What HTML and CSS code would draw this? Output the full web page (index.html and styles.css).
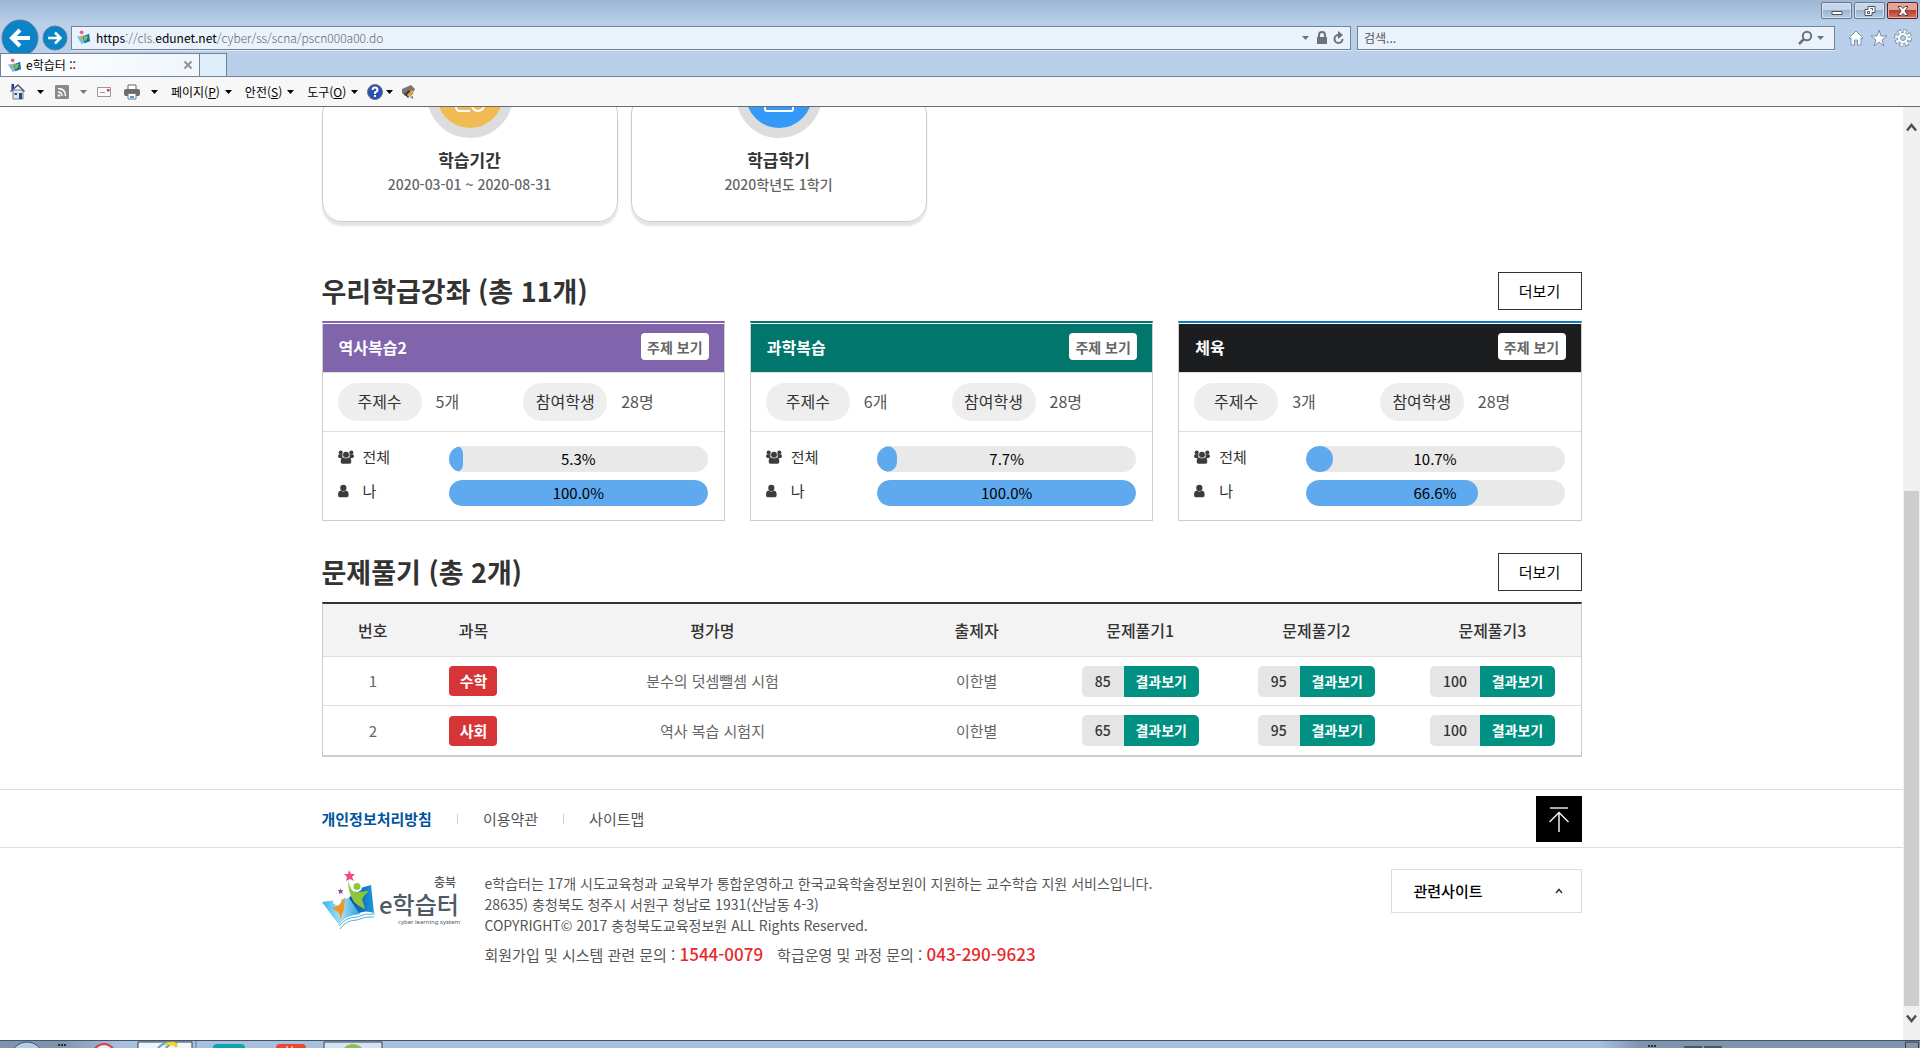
FILE: index.html
```html
<!DOCTYPE html>
<html lang="ko">
<head>
<meta charset="utf-8">
<meta name="viewport" content="width=device-width, initial-scale=1">
<title>e학습터 ::</title>
<link rel="stylesheet" href="styles.css">
</head>
<body>
<svg class="defs" width="0" height="0" aria-hidden="true">
  <symbol id="site-icon" viewBox="0 0 16 16">
    <path d="M1 7l6-1 4 7-5 2z" fill="#6cc4ec"/><path d="M7 7l7-3 1 8-6 2z" fill="#1470b8"/>
    <path d="M7 4l2 3 4-1-2 5-2 1z" fill="#86c440"/><path d="M4 8l3-1-1 5z" fill="#f39a2c"/><circle cx="6" cy="2.500" r="2" fill="#ef5a9a"/>
  </symbol>
  <symbol id="users" viewBox="0 0 18 16">
    <circle cx="3" cy="3" r="2.300"/><circle cx="15" cy="3" r="2.300"/><path d="M0 7q0-2 2-2h3.500q-1.500 2 0 4.500H3.500Q0 9.500 0 7zM18 7q0-2-2-2h-3.500q1.500 2 0 4.500h2Q18 9.500 18 7z"/>
    <circle cx="9" cy="5.500" r="3.300"/><path d="M3 13q0-4.500 3-4.500 3 2 6 0 3 0 3 4.500 0 2.500-2 2.500H5q-2 0-2-2.500z"/>
  </symbol>
  <symbol id="user" viewBox="0 0 18 16">
    <circle cx="6" cy="4.500" r="3.500"/><path d="M0 12.500Q0 8 3 7.500q3 2 6 0 3 .5 3 5 0 2.500-2 2.500H2q-2 0-2-2.500z"/>
  </symbol>
</svg>

<header class="browser">
  <div class="titlebar">
    <button class="win" aria-label="최소화"><svg width="14" height="12" viewBox="0 0 14 12"><path d="M2 6.500h10v3H2z" fill="#fff" stroke="#4b5568"/></svg></button>
    <button class="win" aria-label="이전 크기로"><svg width="14" height="12" viewBox="0 0 14 12"><path d="M5 1.500h7v6H9v3H2v-6h3z" fill="#fff" stroke="#4b5568"/><path d="M4.500 6.500h2v2h-2zM7.500 3.500h2v2" fill="none" stroke="#4b5568"/></svg></button>
    <button class="win win-close" aria-label="닫기"><svg width="14" height="12" viewBox="0 0 14 12"><path d="M2 1.500h3l2 2 2-2h3L9 6l3 4.500H9l-2-2-2 2H2L5 6z" fill="#fff" stroke="#5d3a4a"/></svg></button>
  </div>
  <div class="navbar">
    <button class="nav-back" aria-label="뒤로"><svg width="38" height="38" viewBox="0 0 38 38"><circle cx="19" cy="19" r="18" fill="#0a84c6" stroke="#5f7f9b"/><path d="M29 19H12M19 11l-8 8 8 8" fill="none" stroke="#fff" stroke-width="4"/></svg></button>
    <button class="nav-forward" aria-label="앞으로"><svg width="26" height="26" viewBox="0 0 26 26"><circle cx="13" cy="13" r="12" fill="#0a84c6" stroke="#5f7f9b"/><path d="M6 13h12M13 7.500l5.500 5.500-5.500 5.500" fill="none" stroke="#fff" stroke-width="2.500"/></svg></button>
    <div class="address">
      <svg width="15" height="15"><use href="#site-icon"/></svg>
      <span class="url"><b>https</b>://cls.<b>edunet.net</b>/cyber/ss/scna/pscn000a00.do</span>
      <svg width="26" height="14" viewBox="0 0 26 14"><path d="M0 5h7l-3.500 4z" fill="#6d7276"/><path d="M15 6h10v7H15z" fill="#6d7276"/><path d="M17 6V4a3 3 0 0 1 6 0v2" fill="none" stroke="#6d7276" stroke-width="2"/></svg>
      <svg width="11" height="14" viewBox="0 0 11 14"><path d="M5.500 4A4 4 0 1 0 9.500 8" fill="none" stroke="#6d7276" stroke-width="2"/><path d="M5 0l5 4-5 4z" fill="#6d7276"/></svg>
    </div>
    <div class="search">
      <input type="text" placeholder="검색..." aria-label="검색">
      <svg width="28" height="16" viewBox="0 0 28 16"><circle cx="9" cy="6" r="4.200" fill="none" stroke="#6d7276" stroke-width="2"/><path d="M6 9l-5 5" stroke="#6d7276" stroke-width="2.500"/><path d="M19 6h7l-3.500 4z" fill="#6d7276"/></svg>
    </div>
    <div class="tools">
      <svg width="16" height="18" viewBox="0 0 16 18"><path d="M1 9l7-7 7 7-1 1-1-1v7H9.500v-5h-3v5H3V9l-1 1z" fill="#fff" stroke="#7d90a8"/></svg>
      <svg width="18" height="18" viewBox="0 0 18 18"><path d="M9 1l2 6h6l-5 4 2 6-5-4-5 4 2-6-5-4h6z" fill="#fff" stroke="#7d90a8"/></svg>
      <svg width="18" height="18" viewBox="0 0 18 18"><circle cx="9" cy="9" r="7" fill="none" stroke="#7d90a8" stroke-width="4" stroke-dasharray="3.500 2"/><circle cx="9" cy="9" r="5.500" fill="#fff" stroke="#7d90a8"/><circle cx="9" cy="9" r="6.500" fill="none" stroke="#fff" stroke-width="3" stroke-dasharray="2.300 2.800"/><circle cx="9" cy="9" r="2.500" fill="#bad0ea" stroke="#7d90a8"/></svg>
    </div>
  </div>
  <div class="tabs">
    <div class="tab"><svg width="15" height="15"><use href="#site-icon"/></svg><span>e학습터 ::</span><svg width="10" height="10" viewBox="0 0 10 10"><path d="M1.500 1.500l7 7M8.500 1.500l-7 7" stroke="#8f9296" stroke-width="2"/></svg></div>
    <div class="tab-new"></div>
  </div>
  <div class="commands">
    <svg width="16" height="17" viewBox="0 0 16 17"><path d="M3 7h10v9H3z" fill="#dfe7f0" stroke="#6c7f98"/><path d="M0 8l8-7 7 7-1 1-6-6-7 6z" fill="#46566f"/><path d="M1.500 1h2.500v4l-2.500 2z" fill="#2334b5"/><path d="M9 10h3v6H9z" fill="#274a80"/><path d="M4.500 10h2.500v2H4.500z" fill="#444"/></svg>
    <svg class="arrow" width="7" height="4"><path d="M0 0h7L3.500 4z"/></svg>
    <svg class="after-gap" width="14" height="14" viewBox="0 0 14 14"><rect width="14" height="14" rx="1" fill="#8a8a8a"/><path d="M3 3.500q7.500 0 7.500 7.500M3 7q4 0 4 4" fill="none" stroke="#fff" stroke-width="1.500"/><circle cx="4" cy="10.500" r="1.200" fill="#fff"/></svg>
    <svg class="arrow dim" width="7" height="4"><path d="M0 0h7L3.500 4z"/></svg>
    <svg class="mail" width="14" height="10" viewBox="0 0 14 10"><path d="M.5.5h13v9H.5z" fill="#fafafa" stroke="#9a9a9a"/><path d="M3 5.500h5" stroke="#9a9a9a"/><path d="M10 2h2.500v2.500H10z" fill="#d43b3b"/></svg>
    <svg class="printer" width="16" height="16" viewBox="0 0 16 16"><path d="M4 1h8v5H4z" fill="#fff" stroke="#666"/><rect y="5" width="16" height="7" rx="2" fill="#6a6d70"/><path d="M4 9.500h8V15H4z" fill="#fff" stroke="#777"/><path d="M6 12h4v2H6z" fill="#3aa4d0"/></svg>
    <svg class="arrow" width="7" height="4"><path d="M0 0h7L3.500 4z"/></svg>
    <button class="menu"><span>페이지(<u>P</u>)</span><svg width="7" height="4"><path d="M0 0h7L3.500 4z"/></svg></button>
    <button class="menu"><span>안전(<u>S</u>)</span><svg width="7" height="4"><path d="M0 0h7L3.500 4z"/></svg></button>
    <button class="menu"><span>도구(<u>O</u>)</span><svg width="7" height="4"><path d="M0 0h7L3.500 4z"/></svg></button>
    <button class="menu help" aria-label="도움말"><svg width="16" height="16" viewBox="0 0 16 16"><circle cx="8" cy="8" r="7.500" fill="#2b4fb4" stroke="#6b7383"/><path d="M5.500 6q0-2.500 2.500-2.500T10.500 6Q10.500 7.500 8 8.500V10M8 11v2" fill="none" stroke="#fff" stroke-width="2"/></svg><svg width="7" height="4"><path d="M0 0h7L3.500 4z"/></svg></button>
    <svg class="pen" width="15" height="15" viewBox="0 0 15 15"><path d="M1 5l9-4 4 4-3 6-7 1-3-3z" fill="#7c7772"/><path d="M3 10l5-4 3 4-4 4z" fill="#3c4048"/><path d="M6 11l5-5 2 1-5 6z" fill="#f0a836"/><path d="M9 13l3-1v3z" fill="#5c7fc0"/></svg>
  </div>
</header>

<div class="viewport">
  <div class="page">
    <main class="wrap">
      <section class="summary">
        <article class="info">
          <div class="disc disc-yellow"><svg width="34" height="34" viewBox="0 0 34 34"><path d="M17 33H7q-4 0-4-4V5q0-3 4-3h20q4 0 4 3v9" fill="none" stroke="#fff" stroke-width="2"/><circle cx="25" cy="27" r="6" fill="none" stroke="#fff" stroke-width="2"/></svg></div>
          <h3>학습기간</h3><p>2020-03-01 ~ 2020-08-31</p>
        </article>
        <article class="info">
          <div class="disc disc-blue"><svg width="34" height="34" viewBox="0 0 34 34"><rect x="3" y="4" width="28" height="29" rx="2" fill="none" stroke="#fff" stroke-width="2"/></svg></div>
          <h3>학급학기</h3><p>2020학년도 1학기</p>
        </article>
      </section>

      <section class="block">
        <div class="block-head"><h2>우리학급강좌 (총 11개)</h2><button class="more">더보기</button></div>
        <div class="courses">
          <article class="course purple">
            <div class="course-head"><h3>역사복습2</h3><button class="topics">주제 보기</button></div>
            <dl class="stats"><div><dt>주제수</dt><dd>5개</dd></div><div><dt>참여학생</dt><dd>28명</dd></div></dl>
            <div class="rates">
              <div class="rate"><svg width="16" height="16"><use href="#users"/></svg><span class="who">전체</span><div class="bar"><div class="fill" style="width:5.3%"></div><span class="pct">5.3%</span></div></div>
              <div class="rate"><svg width="16" height="16"><use href="#user"/></svg><span class="who">나</span><div class="bar"><div class="fill" style="width:100%"></div><span class="pct">100.0%</span></div></div>
            </div>
          </article>
          <article class="course green">
            <div class="course-head"><h3>과학복습</h3><button class="topics">주제 보기</button></div>
            <dl class="stats"><div><dt>주제수</dt><dd>6개</dd></div><div><dt>참여학생</dt><dd>28명</dd></div></dl>
            <div class="rates">
              <div class="rate"><svg width="16" height="16"><use href="#users"/></svg><span class="who">전체</span><div class="bar"><div class="fill" style="width:7.7%"></div><span class="pct">7.7%</span></div></div>
              <div class="rate"><svg width="16" height="16"><use href="#user"/></svg><span class="who">나</span><div class="bar"><div class="fill" style="width:100%"></div><span class="pct">100.0%</span></div></div>
            </div>
          </article>
          <article class="course black">
            <div class="course-head"><h3>체육</h3><button class="topics">주제 보기</button></div>
            <dl class="stats"><div><dt>주제수</dt><dd>3개</dd></div><div><dt>참여학생</dt><dd>28명</dd></div></dl>
            <div class="rates">
              <div class="rate"><svg width="16" height="16"><use href="#users"/></svg><span class="who">전체</span><div class="bar"><div class="fill" style="width:10.7%"></div><span class="pct">10.7%</span></div></div>
              <div class="rate"><svg width="16" height="16"><use href="#user"/></svg><span class="who">나</span><div class="bar"><div class="fill" style="width:66.6%"></div><span class="pct">66.6%</span></div></div>
            </div>
          </article>
        </div>
      </section>

      <section class="block">
        <div class="block-head"><h2>문제풀기 (총 2개)</h2><button class="more">더보기</button></div>
        <table class="quizzes">
          <colgroup><col class="c-no"><col class="c-no"><col class="c-name"><col class="c-by"><col class="c-quiz"><col class="c-quiz"><col class="c-quiz"></colgroup>
          <thead><tr><th>번호</th><th>과목</th><th>평가명</th><th>출제자</th><th>문제풀기1</th><th>문제풀기2</th><th>문제풀기3</th></tr></thead>
          <tbody>
            <tr><td>1</td><td><span class="subject">수학</span></td><td>분수의 덧셈뺄셈 시험</td><td>이한별</td>
              <td><span class="result"><span class="score">85</span><button>결과보기</button></span></td>
              <td><span class="result"><span class="score">95</span><button>결과보기</button></span></td>
              <td><span class="result"><span class="score">100</span><button>결과보기</button></span></td></tr>
            <tr><td>2</td><td><span class="subject">사회</span></td><td>역사 복습 시험지</td><td>이한별</td>
              <td><span class="result"><span class="score">65</span><button>결과보기</button></span></td>
              <td><span class="result"><span class="score">95</span><button>결과보기</button></span></td>
              <td><span class="result"><span class="score">100</span><button>결과보기</button></span></td></tr>
          </tbody>
        </table>
      </section>
    </main>

    <footer>
      <div class="foot-nav">
        <div class="wrap foot-row">
          <nav><a class="privacy" href="#">개인정보처리방침</a><a href="#">이용약관</a><a href="#">사이트맵</a></nav>
          <button class="to-top" aria-label="맨 위로"><svg width="24" height="28" viewBox="0 0 24 28"><path d="M3 3h18" stroke="#aaa" stroke-width="2"/><path d="M12 27V7M2.500 17L12 7.500l9.500 9.500" fill="none" stroke="#eee" stroke-width="1.500"/></svg></button>
        </div>
      </div>
      <div class="wrap foot-info">
        <svg class="logo" width="138" height="62" viewBox="0 0 138 62" role="img" aria-label="충북 e학습터">
          <defs>
            <linearGradient id="left-page" x1="0" x2="1"><stop offset="0" stop-color="#35b4e8"/><stop offset=".5" stop-color="#a8e0f6"/><stop offset="1" stop-color="#2a9edc"/></linearGradient>
            <linearGradient id="right-page" x1="0" x2="1"><stop offset="0" stop-color="#0a4a98"/><stop offset="1" stop-color="#1b9ada"/></linearGradient>
          </defs>
          <path d="M0 33l14-2 13-2 11 16-6 1q-10 2-15 10z" fill="url(#left-page)"/>
          <path d="M27 29l8-9 14-4 3 28q-8-3-15 0z" fill="url(#right-page)"/>
          <path d="M17 57q7-9 18-9 8-4 18-3M18 60q6-9 17-9 8-4 17-3" fill="none" stroke="#4bb4e2"/>
          <circle cx="15" cy="32" r="4" fill="#fff"/><circle cx="35" cy="18" r="5" fill="#fff"/>
          <path d="M9 38q6 1 9-3l5-7q-1 8-1 12l-4 12q1-6-2-9z" fill="#f7941d"/>
          <path d="M26 11q2 9 6 12h6q5-1 9-1-5 4-7 8l3 10q-6-2-11-7-6-9-6-22z" fill="#8cc63f"/>
          <circle cx="35" cy="17.500" r="3.500" fill="#8cc63f"/>
          <path d="M27 1l2 4 4 0-3 3 2 4-4-2-4 2 1-4-3-3 4 0z" fill="#ee4a8c"/>
          <path d="M19 19l0 2 2 0-1 2 1 2-2-1-2 1 0-2-1-2 2 0z" fill="#9a4aa5"/>
          <text class="logo-city" x="112" y="18">충북</text>
          <text class="logo-name" x="57" y="45">e학습터</text>
          <text class="logo-sub" x="76" y="55">cyber learning system</text>
        </svg>
        <address>
          <p>e학습터는 17개 시도교육청과 교육부가 통합운영하고 한국교육학술정보원이 지원하는 교수학습 지원 서비스입니다.</p>
          <p>28635) 충청북도 청주시 서원구 청남로 1931(산남동 4-3)</p>
          <p>COPYRIGHT© 2017 충청북도교육정보원 ALL Rights Reserved.</p>
          <p class="contact"><span>회원가입 및 시스템 관련 문의 : <b>1544-0079</b></span><span>학급운영 및 과정 문의 : <b>043-290-9623</b></span></p>
        </address>
        <button class="related">관련사이트<svg width="8" height="6" viewBox="0 0 8 6"><path d="M1 5l3-3.500L7 5" fill="none" stroke="#333" stroke-width="1.500"/></svg></button>
      </div>
    </footer>
  </div>
  <div class="scrollbar">
    <svg width="11" height="9" viewBox="0 0 11 9"><path d="M1 7.500L5.500 2 10 7.500" fill="none" stroke="#505050" stroke-width="2.500"/></svg>
    <div class="track"><div class="thumb"></div></div>
    <svg width="11" height="9" viewBox="0 0 11 9"><path d="M1 1.500L5.500 7 10 1.500" fill="none" stroke="#505050" stroke-width="2.500"/></svg>
  </div>
</div>

<div class="taskbar">
  <svg width="400" height="7" viewBox="0 0 400 7">
    <ellipse cx="27" cy="14" rx="15" ry="13" fill="#b8cde0" stroke="#2c5a85"/>
    <path d="M58 4h8" stroke="#222f40" stroke-width="2" stroke-dasharray="2 1"/>
    <circle cx="104" cy="14" r="11" fill="#f4e8ec" stroke="#d34052" stroke-width="2"/>
    <path d="M138 8V1h54v6" fill="#eef4fb" stroke="#33404f"/><path d="M196 0v7" stroke="#66778c"/>
    <path d="M158 7q6-6 9-4M166 7q5-6 11-4" fill="none" stroke="#5aa0d0" stroke-width="2"/><path d="M165 4q9-4 12 2" fill="none" stroke="#f7d51f" stroke-width="3"/>
    <rect x="213" y="3" width="32" height="12" rx="4" fill="#0ca5ab"/><rect x="276" y="3" width="30" height="12" rx="4" fill="#ee4430"/><path d="M287 5v2M292 5v2" stroke="#fff"/>
    <path d="M324 8V1h58v6" fill="#d6e2f1" stroke="#33404f"/><circle cx="353" cy="15" r="12" fill="#8cbf5c"/>
  </svg>
  <svg width="280" height="7" viewBox="0 0 280 7">
    <path d="M8 5h8" stroke="#222f40" stroke-width="2" stroke-dasharray="2 1"/><path d="M44 6h18M64 6h18" stroke="#4a5668" stroke-width="2"/><path d="M265.500 8V1h13v7" fill="#8593a8" stroke="#343e4d"/>
  </svg>
</div>
</body>
</html>
```
FILE: styles.css
```css
* { box-sizing: border-box; }
body {
  margin: 0;
  height: 100vh;
  display: flex;
  flex-direction: column;
  overflow: hidden;
  background: #fff;
  color: #333;
  font: 15px/24px "Noto Sans CJK KR", "Noto Sans", sans-serif;
}
h2, h3, p, dl, dd { margin: 0; }
button { font: inherit; color: inherit; padding: 0; border: 0; background: none; }
svg { display: block; flex: none; }
.defs { position: absolute; }

/* Browser frame */
.browser {
  flex: none;
  background: linear-gradient(#9cb6d3, #bad0ea 24px);
  font-size: 12px;
  line-height: 16px;
  color: #000;
}
.titlebar { display: flex; justify-content: flex-end; gap: 2px; height: 22px; padding: 2px 2px 0 0; }
.win {
  width: 31px;
  height: 17px;
  display: flex;
  align-items: center;
  justify-content: center;
  border: 1px solid #66798f;
  border-radius: 2px;
  background: linear-gradient(#c6d6e8 45%, #9bb2cb 50%, #b9cee4);
  box-shadow: inset 0 0 0 1px #d5e2f0;
}
.win-close { border-color: #5d1f28; background: linear-gradient(#e0a597 45%, #b8402b 50%, #d57463); box-shadow: inset 0 0 0 1px #e8aca0; }
.navbar { display: flex; align-items: center; height: 31px; padding: 0 8px 0 1px; }
.nav-back { width: 41px; display: flex; margin: -4px 0; }
.nav-forward { width: 29px; display: flex; }
.address, .search {
  height: 24px;
  display: flex;
  align-items: center;
  border: 1px solid #738296;
  background: #eaf2fb;
  box-shadow: 0 1px 0 #dfeaf6;
}
.address { flex: 1; gap: 5px; padding: 0 6px 0 4px; }
.url { flex: 1; font-weight: 300; line-height: 20px; color: #666; white-space: nowrap; }
.url b { font-weight: 400; color: #000; }
.search { width: 478px; margin-left: 6px; padding: 0 8px 0 6px; }
.search input { flex: 1; border: 0; padding: 0; background: none; font: inherit; }
.search input::placeholder { color: #555; opacity: 1; }
.tools { display: flex; gap: 6px; margin-left: 13px; }
.tabs { position: relative; display: flex; height: 24px; border-bottom: 1px solid #738296; background: #bad0ea; }
.tab {
  width: 200px;
  display: flex;
  align-items: center;
  gap: 4px;
  padding: 0 6px;
  border: 1px solid #738296;
  border-bottom: 0;
  background: linear-gradient(90deg, #fff, #f0f6fd);
}
.tab span { flex: 1; }
.tab-new { width: 27px; border: 1px solid #738296; border-width: 1px 1px 0 0; background: #e0edfa; }
.commands { display: flex; align-items: center; height: 30px; padding-left: 10px; border-bottom: 1px solid #6b6b6b; background: #f7f7f7; }
.commands .arrow { margin-left: 11px; }
.commands .dim { fill: #777; }
.after-gap { margin-left: 11px; }
.mail { margin-left: 10px; }
.printer { margin-left: 13px; }
.menu { display: flex; align-items: center; gap: 5px; margin-left: 13px; }
.menu.help { gap: 3px; margin-left: 9px; }
.pen { margin-left: 8px; }

/* The page stays scrolled to its end */
.viewport { flex: 1; min-height: 0; display: flex; overflow: hidden; }
.page { flex: 1; display: flex; flex-direction: column; justify-content: flex-end; }
.wrap { width: 100%; max-width: 1260px; margin: 0 auto; }
.scrollbar { width: 17px; display: flex; flex-direction: column; align-items: center; padding: 16px 0 17px; background: #f0f0f0; }
.track { flex: 1; align-self: stretch; display: flex; align-items: flex-end; padding: 8px 1px; }
.thumb { width: 100%; height: 59.5%; background: #cdcdcd; }

.summary { display: flex; gap: 13px; margin-bottom: 50px; }
.info {
  width: 296px;
  padding-bottom: 25px;
  border: 1px solid #ccc;
  border-radius: 20px;
  box-shadow: 0 4px 2px #e4e4e4;
  text-align: center;
}
.info h3 { font-size: 17px; line-height: 24px; }
.info p { font-size: 14px; font-weight: 500; color: #666; }
.disc { width: 86px; height: 86px; margin: -43px auto 10px; border: 10px solid #ddd; border-radius: 50%; display: flex; align-items: center; justify-content: center; }
.disc-yellow { background: #f0bb52; }
.disc-blue { background: #3499f8; }

.block { margin-bottom: 32px; }
.block-head { display: flex; align-items: center; justify-content: space-between; height: 38px; margin-bottom: 11px; }
.block-head h2 { font-size: 27px; line-height: 38px; }
.more { width: 84px; height: 38px; border: 1px solid #333; color: #000; }

.courses { display: grid; grid-template-columns: repeat(3, 1fr); gap: 25px; }
.course { padding-top: 1px; border: 1px solid #ccc; border-top: 2px solid; }
.course-head { display: flex; align-items: flex-start; justify-content: space-between; height: 49px; padding: 9px 15px 0 16px; border-bottom: 1px solid #ddd; color: #fff; background-clip: padding-box; }
.purple { border-top-color: #8064ac; }
.purple .course-head { background-color: #8064ac; }
.green { border-top-color: #00766c; }
.green .course-head { background-color: #00766c; }
.black { border-top-color: #0f7abf; }
.black .course-head { background-color: #1c1d1f; }
.course h3 { font-size: 16px; line-height: 29px; }
.topics { width: 68px; height: 27px; border-radius: 4px; background: #fff; color: #666; font-size: 14px; font-weight: 700; }
.stats { display: flex; height: 59px; padding: 10px 15px; border-bottom: 1px solid #ddd; font-size: 16px; line-height: 37px; }
.stats > div { flex: 1; display: flex; gap: 14px; }
.stats dt { width: 84px; border-radius: 19px; background: #eee; text-align: center; }
.stats dd { color: #555; }
.rates { display: flex; flex-direction: column; gap: 8px; padding: 14px 16px 14px 15px; }
.rate { display: flex; height: 26px; line-height: 21px; fill: #3c3c3c; }
.rate svg { margin-top: 3px; }
.who { flex: 1; margin-left: 9px; }
.bar { position: relative; flex: none; width: 259px; border-radius: 13px; background: #e9e9e9; overflow: hidden; }
.fill { height: 100%; border-radius: 13px; background: #5faaef; }
.pct { position: absolute; inset: 0; text-align: center; line-height: 26px; color: #000; }

.quizzes { width: 100%; table-layout: fixed; border-collapse: separate; border-spacing: 0; border: 1px solid #ccc; border-top: 2px solid #333; border-bottom-width: 2px; text-align: center; }
.c-no { width: 8%; }
.c-name { width: 30%; }
.c-by { width: 12%; }
.c-quiz { width: 14%; }
.quizzes th { height: 53px; padding: 0; border-bottom: 1px solid #ddd; background: #f3f3f3; font-size: 16px; font-weight: 500; }
.quizzes td { height: 49px; padding: 0; color: #666; }
.quizzes tr:first-child td { border-bottom: 1px solid #ddd; }
.subject { display: inline-block; width: 48px; border-radius: 4px; background: #d63538; color: #fff; font-weight: 700; line-height: 30px; vertical-align: middle; }
.result { display: inline-flex; border-radius: 5px; overflow: hidden; font-size: 14px; line-height: 31px; vertical-align: middle; }
.score { padding: 0 13px; background: #e5e5e5; color: #333; font-weight: 500; }
.result button { width: 75px; background: #009182; color: #fff; font-weight: 700; }

.foot-nav { border: 1px solid #ddd; border-width: 1px 0; }
.foot-row { display: flex; align-items: center; justify-content: space-between; height: 57px; }
.foot-row nav { display: flex; align-items: center; }
.foot-row a { color: #555; text-decoration: none; line-height: 24px; }
.foot-row a + a { display: flex; align-items: center; }
.foot-row a + a::before { content: ""; width: 1px; height: 10px; margin: 0 25px; background: #ccc; }
.foot-row .privacy { color: #00549f; font-weight: 700; }
.to-top { width: 46px; height: 46px; display: flex; align-items: center; justify-content: center; background: #000; }
.foot-info { display: flex; align-items: flex-start; padding: 21px 0 73px; }
.logo { fill: #4e5a64; }
.logo-city { font-size: 12px; font-weight: 500; }
.logo-name { font-size: 24px; font-weight: 500; }
.logo-sub { font: 6px "Noto Sans", sans-serif; }
.foot-info address { flex: 1; margin-left: 25px; padding-top: 4px; font-size: 14px; font-style: normal; line-height: 21px; color: #555; }
.foot-info .contact { display: flex; gap: 14px; margin-top: 6px; font-size: 15px; line-height: 24px; }
.contact b { font-size: 17px; font-weight: 500; color: #e8292c; }
.related { width: 191px; height: 44px; display: flex; align-items: center; justify-content: space-between; padding: 0 18px 0 22px; border: 1px solid #ddd; color: #000; font-weight: 500; }

.taskbar {
  flex: none;
  display: flex;
  justify-content: space-between;
  border-top: 1px solid #44536a;
  background: linear-gradient(90deg, #8093ad 0, #8093ad 60px, #a6c0de 120px, #a6c0de 1600px, #8093ad 1640px);
}
```
